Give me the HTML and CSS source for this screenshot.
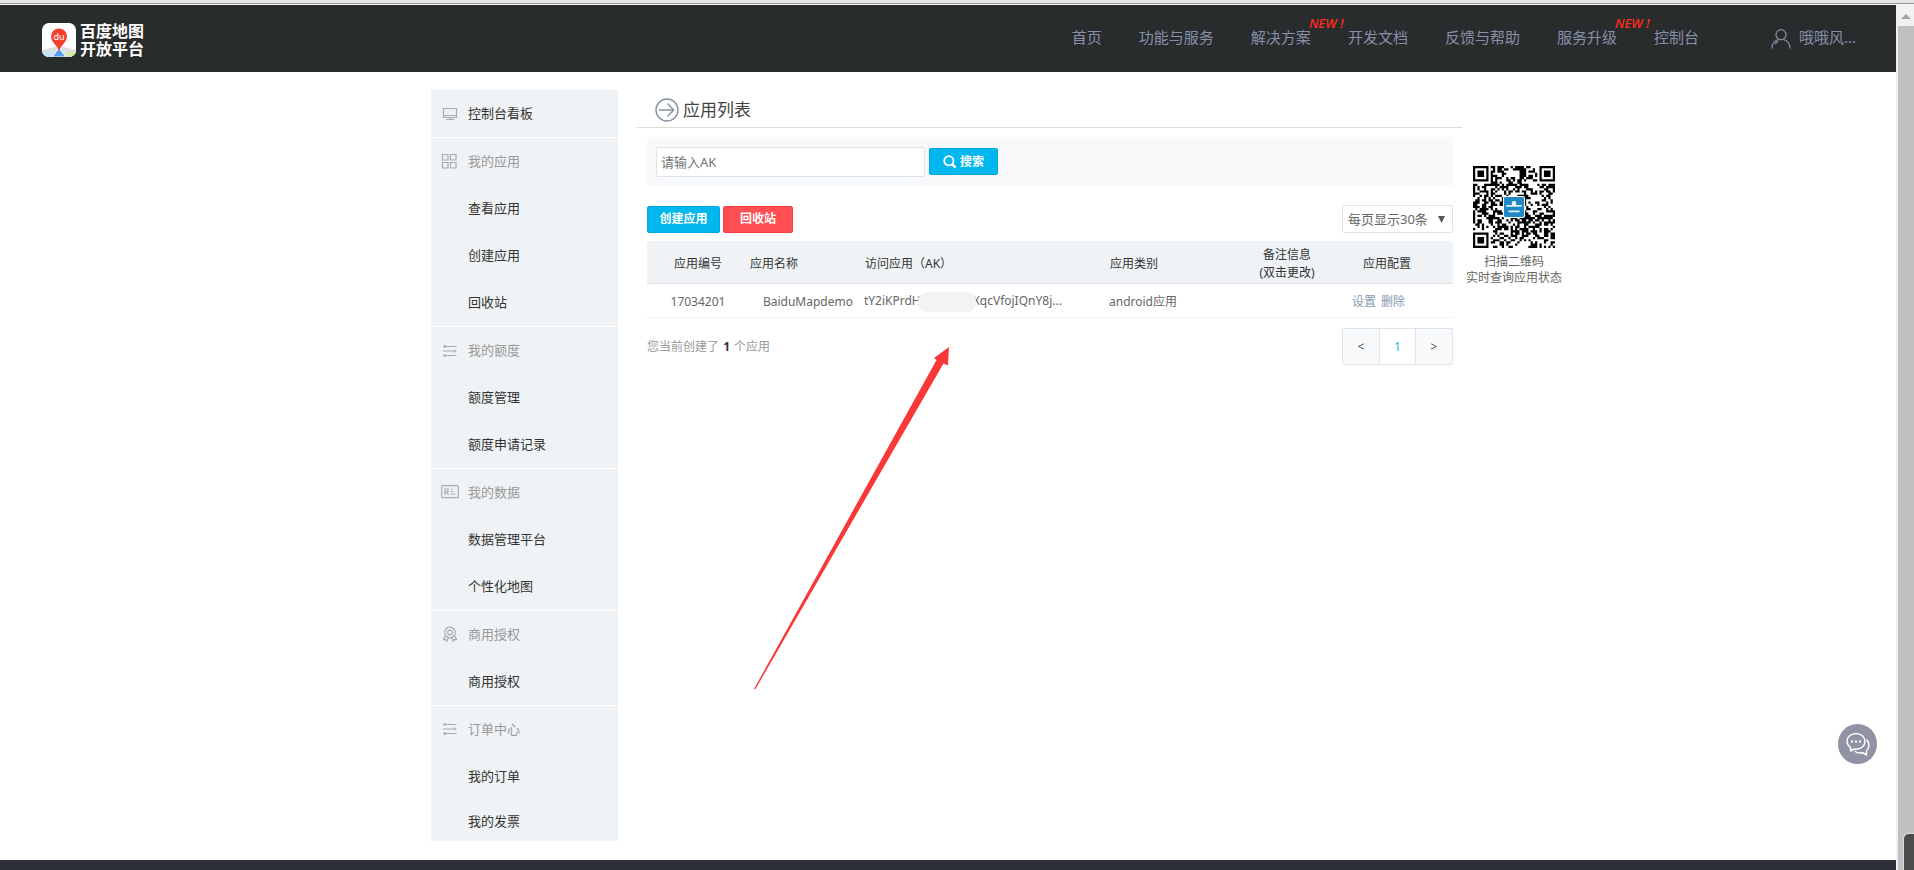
FILE: index.html
```html
<!DOCTYPE html>
<html lang="zh-CN">
<head>
<meta charset="utf-8">
<title>百度地图开放平台 - 应用列表</title>
<link rel="stylesheet" href="styles.css">
</head>
<body>
<div class="chrome-edge"></div>
<div class="viewport">
  <div class="page">
    <header class="header">
      <a class="logo" href="#">
        <svg class="logo-icon" viewBox="0 0 34 34" aria-hidden="true">
          <defs><clipPath id="tile"><rect width="34" height="34" rx="7"/></clipPath></defs>
          <g clip-path="url(#tile)">
            <rect width="34" height="34" fill="#fff"/>
            <path d="M0 27 L17 23 L34 27 V34 H0Z" fill="#dcdfe2"/>
            <path d="M0 29 H11 L8 34 H0Z" fill="#bfe6fb"/>
            <path d="M23 29 H34 V34 H26Z" fill="#cdec9c"/>
            <path d="M17 25 L24 34 H10Z" fill="#549cf5" stroke="#fff" stroke-width="1"/>
            <path d="M17 28 C16 23 9 19 9 13.500 A8 8 0 0 1 25 13.500 C25 19 18 23 17 28Z" fill="#f3402f"/>
          </g>
          <text x="17" y="17" class="logo-du">du</text>
        </svg>
        <span class="logo-text">百度地图<br>开放平台</span>
      </a>
      <nav class="nav">
        <a href="#">首页</a>
        <a href="#">功能与服务</a>
        <a href="#">解决方案<span class="new">NEW !</span></a>
        <a href="#">开发文档</a>
        <a href="#">反馈与帮助</a>
        <a href="#">服务升级<span class="new">NEW !</span></a>
        <a href="#">控制台</a>
      </nav>
      <a class="user" href="#">
        <svg width="20" height="20" viewBox="0 0 20 20" fill="none" stroke="#8289a0" stroke-width="1.300" aria-hidden="true"><circle cx="10" cy="5.700" r="5"/><path d="M1 19.500 C1 14 4 11.500 7.500 10.500 M12.500 10.500 C16 11.500 19 14 19 19.500 M4 15 L7 12"/></svg>
        <span>哦哦风...</span>
      </a>
    </header>

    <main class="layout">
      <aside class="sidebar">
        <section>
          <a class="top" href="#"><svg class="ico" viewBox="0 0 18 18"><path d="M2.500 4.500h13v9h-13zM9 13.500v2M5 15.500h8M3 11.500h12"/></svg>控制台看板</a>
        </section>
        <section>
          <h2><svg class="ico" viewBox="0 0 18 18"><path d="M1.500 2.500h5.500v5.500h-5.500zM9.500 2.500h5.500v5.500h-5.500zM1.500 10.500h5.500v5.500h-5.500zM9.500 10.500h5.500v5.500h-5.500z"/></svg>我的应用</h2>
          <a href="#">查看应用</a><a href="#">创建应用</a><a href="#">回收站</a>
        </section>
        <section>
          <h2><svg class="ico" viewBox="0 0 18 18"><path d="M2 5.500h13.500M2 10h13.500M2 14.500h13.500M4 4v3M13.500 8.500v3M4 13v3"/></svg>我的额度</h2>
          <a href="#">额度管理</a><a href="#">额度申请记录</a>
        </section>
        <section>
          <h2><svg class="ico" viewBox="0 0 18 18"><rect x=".7" y="2.700" width="16.600" height="12" rx="1"/><path d="M4 12V6h3v3H4M5.500 9L7.500 12M9.500 6h2M9.500 8.500h3M9.500 11h5"/></svg>我的数据</h2>
          <a href="#">数据管理平台</a><a href="#">个性化地图</a>
        </section>
        <section>
          <h2><svg class="ico" viewBox="0 0 18 18"><circle cx="9" cy="7.500" r="5.300"/><circle cx="9" cy="7.500" r="2.400"/><path d="M4.500 10.500L2.500 14.500l2.200-.2L6 16l1.500-3.500M13.500 10.500l2 4-2.200-.2L12 16 10.500 12.500"/></svg>商用授权</h2>
          <a href="#">商用授权</a>
        </section>
        <section>
          <h2><svg class="ico" viewBox="0 0 18 18"><path d="M2 4.500h13.500M2 9h13.500M2 13.500h13.500M4 3v3M13.500 7.500v3M4 12v3"/></svg>订单中心</h2>
          <a href="#">我的订单</a><a href="#">我的发票</a>
        </section>
      </aside>

      <section class="content">
        <h1 class="title">
          <svg width="24" height="24" viewBox="0 0 24 24" fill="none" stroke="#8592a3" stroke-width="1.400" aria-hidden="true"><circle cx="12" cy="12" r="11"/><path d="M4 12h14.500M12.500 5.500L18.700 12l-6.200 6.500"/></svg>
          应用列表
        </h1>
        <div class="body">
          <form class="search">
            <input type="text" placeholder="请输入AK" aria-label="请输入AK">
            <button class="btn blue find" type="button"><svg width="14" height="14" viewBox="0 0 14 14" fill="none" stroke="#fff" aria-hidden="true"><circle cx="5.800" cy="5.800" r="4.600" stroke-width="1.800"/><path d="M9.300 9.300L12.600 12.600" stroke-width="2.600"/></svg>搜索</button>
          </form>
          <div class="tools">
            <button class="btn blue" type="button">创建应用</button>
            <button class="btn red" type="button">回收站</button>
            <span class="per-page">
              <select aria-label="每页显示条数"><option>每页显示30条</option></select>
              <svg width="7" height="7" viewBox="0 0 8 8" aria-hidden="true"><path d="M0 0h8L4 8z" fill="#555"/></svg>
            </span>
          </div>
          <table class="apps">
            <colgroup><col class="c1"><col class="c2"><col class="c3"><col class="c4"><col class="c5"><col class="c6"></colgroup>
            <thead><tr><th class="id">应用编号</th><th>应用名称</th><th>访问应用（AK）</th><th>应用类别</th><th class="note">备注信息<br>(双击更改)</th><th class="conf">应用配置</th></tr></thead>
            <tbody><tr><td class="id">17034201</td><td class="name">BaiduMapdemo</td><td>tY2iKPrdH<span class="mask"></span>XqcVfojIQnY8j...</td><td>android应用</td><td></td><td class="conf"><a href="#">设置</a><a href="#">删除</a></td></tr></tbody>
          </table>
          <div class="foot">
            <p>您当前创建了 <b>1</b> 个应用</p>
            <nav class="pager"><button type="button">&lt;</button><button class="on" type="button">1</button><button type="button">&gt;</button></nav>
          </div>
        </div>
        <svg class="pointer" width="196" height="343" viewBox="0 0 196 343" aria-hidden="true"><path d="M195 0L194 18.500 189.500 16.500 1.500 342H0L182.500 13 180 11Z" fill="#fb3838"/></svg>
      </section>

      <aside class="qr">
        <svg id="qr" width="82" height="82" viewBox="0 0 37 37" role="img" aria-label="二维码"></svg>
        <p>扫描二维码<br>实时查询应用状态</p>
      </aside>
    </main>
    <footer class="footer"></footer>
    <button class="chat" type="button" aria-label="在线咨询"><svg width="24" height="24" viewBox="0 0 24 24" fill="none" stroke="#fff" stroke-width="1.500" stroke-linejoin="round" aria-hidden="true"><path d="M4.500 15.500C2.500 14 1 12 1 9.500 1 5 5 1.500 10 1.500s9 3.500 9 8-4 7.700-9 7.700c-.8 0-1.500 0-2-.2L4.500 19zM20.500 7.500c3 3 3.500 8 0 11.500v4l-3.500-2.300c-3 .8-6.500 0-8.500-1.700"/><path d="M5 9.500h2M9 9.500h2M13 9.500h2" stroke-width="2"/></svg></button>
  </div>
  <div class="scrollbar">
    <svg class="up" width="10" height="5" viewBox="0 0 10 5" aria-hidden="true"><path d="M0 5L5 0l5 5z" fill="#a3a3a3"/></svg>
    <div class="thumb"></div>
    <div class="tab"></div>
  </div>
</div>
<script src="qr.js"></script>
</body>
</html>
```
FILE: styles.css
```css
* { box-sizing: border-box; }
body {
  margin: 0;
  height: 100vh;
  overflow: hidden;
  display: flex;
  flex-direction: column;
  font: 12px/18px "Noto Sans", "Noto Sans CJK SC", sans-serif;
  color: #666;
  background: #fff;
}
a { color: inherit; text-decoration: none; }
h1, h2, p { margin: 0; font-weight: 400; }
button, input, select { font: inherit; margin: 0; }
button { cursor: pointer; }

.chrome-edge { flex: none; height: 5px; background: #e5e5e5; border-bottom: 1px solid #f4f4f4; box-shadow: inset 0 -1px #999; }
.viewport { flex: 1; min-height: 0; display: flex; }
.page { flex: 1; min-width: 0; position: relative; display: flex; flex-direction: column; }

.header { flex: none; height: 67px; padding: 0 40px 0 42px; display: flex; align-items: center; background: #292c2d; color: #8790a8; font-size: 15px; line-height: 20px; }
.logo { display: flex; align-items: center; gap: 4px; margin-right: auto; padding-top: 3px; color: #fff; }
.logo-icon { width: 34px; height: 34px; }
.logo-du { font: 9px "Noto Sans", sans-serif; fill: #fff; text-anchor: middle; }
.logo-text { padding-bottom: 2px; font: 700 16px/18px "Noto Sans CJK SC", sans-serif; }
.nav { display: flex; gap: 37px; padding-bottom: 4px; }
.nav a { position: relative; white-space: nowrap; }
.new { position: absolute; left: 100%; top: -12px; margin-left: -2px; color: #ff2a1c; font: italic 600 13px/16px "Open Sans", sans-serif; }
.user { margin-left: 72px; display: flex; align-items: center; gap: 8px; }
.user span { padding-bottom: 4px; }

.layout { flex: none; display: grid; grid-template-columns: 1fr 187px 847px 1fr; padding: 18px 0 19px; }
.sidebar { grid-column: 2; color: #333; }
.sidebar section { background: #eff3f5; }
.sidebar section + section { border-top: 1px solid #fff; }
.sidebar a, .sidebar h2 { display: flex; align-items: center; height: 47px; padding: 0 0 2px 37px; font-size: 13px; }
.sidebar h2, .sidebar .top { padding-left: 10px; gap: 9px; }
.sidebar h2 { color: #999; }
.sidebar section:last-child a:last-child { height: 41px; padding-bottom: 0; }
.ico { width: 18px; height: 18px; fill: none; stroke: #aaa; stroke-width: 1.2; }

.content { position: relative; padding-left: 19px; }
.title { display: flex; align-items: center; gap: 4px; height: 38px; margin-right: 3px; padding: 2px 0 0 18px; border-bottom: 1px solid #ddd; font-size: 17px; line-height: 24px; color: #444; }
.body { padding: 9px 12px 0 10px; }
.search { display: flex; align-items: center; gap: 4px; height: 49px; padding: 0 9px; background: #f8f9fb; border-radius: 3px; }
.search input { width: 269px; height: 30px; padding: 0 4px; border: 1px solid #dfe4ec; border-radius: 2px; background: #fff; font-size: 13px; color: #666; }
.search input::placeholder { color: #757575; opacity: 1; }
.btn { display: flex; align-items: center; justify-content: center; min-width: 73px; height: 27px; padding: 0; border: 1px solid; border-radius: 2px; color: #fff; font-weight: 700; }
.blue { background: #00b7ee; border-color: #00a5e3; }
.red { min-width: 70px; background: #ff4f52; border-color: #fb3c40; }
.find { min-width: 69px; gap: 3px; }
.tools { display: flex; align-items: center; gap: 3px; margin: 19px 0 8px; }
.per-page { position: relative; margin-left: auto; }
.per-page select { display: block; appearance: none; width: 111px; height: 28px; padding: 0 5px; border: 1px solid #dfe4ec; border-radius: 2px; background: #fff; color: #666; font-size: 13px; }
.per-page svg { position: absolute; right: 8px; top: 11px; pointer-events: none; }

.apps { width: 100%; table-layout: fixed; border-collapse: separate; border-spacing: 0; }
.c1 { width: 102px; } .c2 { width: 115px; } .c3 { width: 245px; } .c4 { width: 120px; } .c5 { width: 116px; }
.apps th { height: 43px; padding: 3px 1px 0; text-align: left; font-weight: 400; color: #333; background: #eff3f6; border-bottom: 1px solid #dde3e8; }
.apps th:first-child { border-top-left-radius: 4px; }
.apps th:last-child { border-top-right-radius: 4px; }
.apps td { height: 34px; padding: 2px 0 0; border-bottom: 1px solid #f0f1f2; white-space: nowrap; }
.apps .id, .apps .note { text-align: center; }
.apps .name { text-align: right; padding-right: 11px; }
.apps th.conf { padding-left: 18px; }
.apps td.conf { padding-left: 7px; color: #8798b0; }
.conf a + a { margin-left: 5px; }
.mask { position: relative; display: inline-block; width: 58px; height: 20px; margin: 0 -3px; vertical-align: middle; border-radius: 9px; background: #f3f3f3; }

.foot { display: flex; align-items: center; justify-content: space-between; margin-top: 10px; color: #999; }
.foot b { margin: 0 1px; color: #333; }
.pager { display: flex; border: 1px solid #dfe4ec; border-radius: 2px; }
.pager button { width: 36px; height: 35px; padding: 0; border: 0; background: #f8f9fb; color: #555; }
.pager .on { width: 37px; border: solid #dfe4ec; border-width: 0 1px; background: #fff; color: #14b5ea; }
.pointer { position: absolute; left: 136px; top: 257px; pointer-events: none; }

.qr { justify-self: start; padding-top: 76px; width: 98px; text-align: center; line-height: 16px; }
.qr svg { display: block; margin: 0 auto 6px; }

.footer { flex: 1; background: #2d3038; }
.chat { position: absolute; right: 19px; bottom: 106px; width: 39px; height: 40px; padding: 0; border: 0; border-radius: 50%; background: #8f93a3; display: grid; place-items: center; }

.scrollbar { flex: none; width: 18px; padding-left: 2px; background: #f1f1f1; position: relative; display: flex; flex-direction: column; }
.up { margin: 9px 0 7px 3px; }
.thumb { flex: 1; background: #c1c1c1; }
.tab { position: absolute; right: 0; bottom: 0; width: 10px; height: 36px; border-radius: 5px 0 0 0; background: #4c4c4c; box-shadow: 0 0 0 1px #ddd; }
```
FILE: qr.js
```js
(function () {
  var n = 37, d = '', seed = 20177;
  function random() {
    seed = (seed * 1103515245 + 12345) % 2147483648;
    return seed / 2147483648;
  }
  function inFinder(x, y) {
    return (x < 8 && y < 8) || (x > n - 9 && y < 8) || (x < 8 && y > n - 9);
  }
  for (var y = 0; y < n; y++) {
    for (var x = 0; x < n; x++) {
      var dark = random() < 0.5;
      if (dark && !inFinder(x, y)) d += 'M' + x + ' ' + y + 'h1v1h-1z';
    }
  }
  [[0, 0], [n - 7, 0], [0, n - 7]].forEach(function (p) {
    d += 'M' + p[0] + ' ' + p[1] + 'h7v7h-7zm1 1v5h5v-5zm1 1h3v3h-3z';
  });
  document.getElementById('qr').innerHTML =
    '<path d="' + d + '" fill="#000" fill-rule="evenodd"/>' +
    '<rect x="13.500" y="13.500" width="10" height="10" rx="1" fill="#fff"/>' +
    '<rect x="14" y="14" width="9" height="9" rx=".6" fill="#2088c4"/>' +
    '<path d="M15 18h7M16 20.500h5" stroke="#d8eefa" stroke-width=".8"/>' +
    '<circle cx="18.500" cy="16.800" r="1" fill="#fff"/>';
})();
```
